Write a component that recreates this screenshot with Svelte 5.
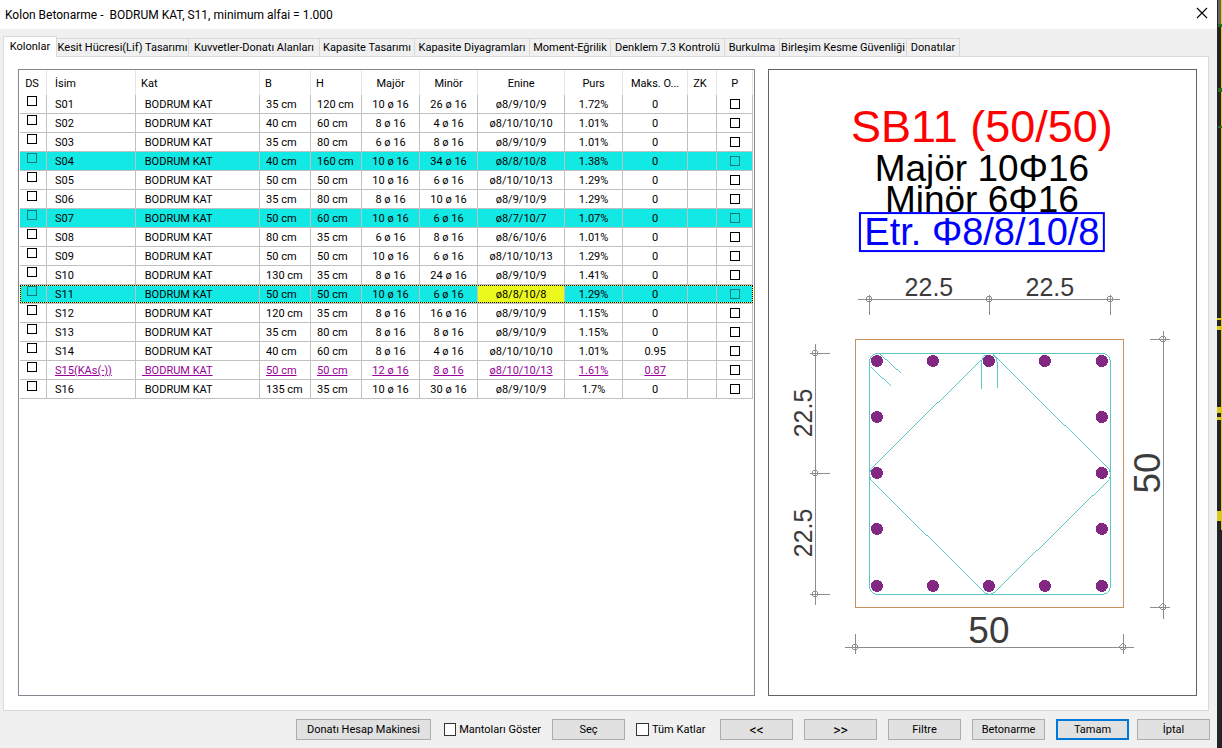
<script>
  const tabs = [
    { label: 'Kolonlar', width: 54 },
    { label: 'Kesit Hücresi(Lif) Tasarımı', width: 132 },
    { label: 'Kuvvetler-Donatı Alanları', width: 131 },
    { label: 'Kapasite Tasarımı', width: 95 },
    { label: 'Kapasite Diyagramları', width: 115 },
    { label: 'Moment-Eğrilik', width: 81 },
    { label: 'Denklem 7.3 Kontrolü', width: 114 },
    { label: 'Burkulma', width: 55 },
    { label: 'Birleşim Kesme Güvenliği', width: 127 },
    { label: 'Donatılar', width: 53 }
  ];

  const columns = [
    { label: 'DS', width: 27 },
    { label: 'İsim', width: 89 },
    { label: 'Kat', width: 124 },
    { label: 'B', width: 51 },
    { label: 'H', width: 51 },
    { label: 'Majör', width: 58 },
    { label: 'Minör', width: 58 },
    { label: 'Enine', width: 87 },
    { label: 'Purs', width: 58 },
    { label: 'Maks. O...', width: 65 },
    { label: 'ZK', width: 29 },
    { label: 'P', width: 36 }
  ];

  // name, b, h, major, minor, stirrup, ratio, max, state
  const rows = [
    ['S01', '35 cm', '120 cm', '10 ø 16', '26 ø 16', 'ø8/9/10/9', '1.72%', '0', ''],
    ['S02', '40 cm', '60 cm', '8 ø 16', '4 ø 16', 'ø8/10/10/10', '1.01%', '0', ''],
    ['S03', '35 cm', '80 cm', '6 ø 16', '8 ø 16', 'ø8/9/10/9', '1.01%', '0', ''],
    ['S04', '40 cm', '160 cm', '10 ø 16', '34 ø 16', 'ø8/8/10/8', '1.38%', '0', 'marked'],
    ['S05', '50 cm', '50 cm', '10 ø 16', '6 ø 16', 'ø8/10/10/13', '1.29%', '0', ''],
    ['S06', '35 cm', '80 cm', '8 ø 16', '10 ø 16', 'ø8/9/10/9', '1.29%', '0', ''],
    ['S07', '50 cm', '60 cm', '10 ø 16', '6 ø 16', 'ø8/7/10/7', '1.07%', '0', 'marked'],
    ['S08', '80 cm', '35 cm', '6 ø 16', '8 ø 16', 'ø8/6/10/6', '1.01%', '0', ''],
    ['S09', '50 cm', '50 cm', '10 ø 16', '6 ø 16', 'ø8/10/10/13', '1.29%', '0', ''],
    ['S10', '130 cm', '35 cm', '8 ø 16', '24 ø 16', 'ø8/9/10/9', '1.41%', '0', ''],
    ['S11', '50 cm', '50 cm', '10 ø 16', '6 ø 16', 'ø8/8/10/8', '1.29%', '0', 'marked focused'],
    ['S12', '120 cm', '35 cm', '8 ø 16', '16 ø 16', 'ø8/9/10/9', '1.15%', '0', ''],
    ['S13', '35 cm', '80 cm', '8 ø 16', '8 ø 16', 'ø8/9/10/9', '1.15%', '0', ''],
    ['S14', '40 cm', '60 cm', '8 ø 16', '4 ø 16', 'ø8/10/10/10', '1.01%', '0.95', ''],
    ['S15(KAs(-))', '50 cm', '50 cm', '12 ø 16', '8 ø 16', 'ø8/10/10/13', '1.61%', '0.87', 'failed'],
    ['S16', '135 cm', '35 cm', '10 ø 16', '30 ø 16', 'ø8/9/10/9', '1.7%', '0', '']
  ];

  // Rebar positions around the section
  const xs = [108, 164, 220, 276, 333];
  const ys = [291, 347, 403, 459, 516];
  const bars = [];
  xs.forEach((x, i) => {
    ys.forEach((y, j) => {
      if (i === 0 || i === 4 || j === 0 || j === 4) bars.push({ x, y });
    });
  });

  // Dimension line end marks
  const marks = [
    [100, 229], [220, 229], [341, 229],
    [46, 283], [46, 403], [46, 524],
    [394, 269], [394, 537],
    [86, 577], [354, 577]
  ];

  let activeTab = $state('Kolonlar');
</script>

<div class="screen">
  <div class="dialog">
    <header class="titlebar">
      <h1>Kolon Betonarme -&nbsp; BODRUM KAT, S11, minimum alfai = 1.000</h1>
      <button class="close" aria-label="Kapat">
        <svg width="12" height="12" viewBox="0 0 12 12">
          <path d="M1 1 L11 11 M11 1 L1 11" stroke="#000" stroke-width="1.1" fill="none" />
        </svg>
      </button>
    </header>

    <div class="tabs" role="tablist">
      {#each tabs as tab}
        <button
          class="tab"
          class:active={tab.label === activeTab}
          role="tab"
          aria-selected={tab.label === activeTab}
          style="width: {tab.width}px"
          onclick={() => (activeTab = tab.label)}
        >{tab.label}</button>
      {/each}
    </div>

    <main class="panel">
      <section class="list">
        <table>
          <colgroup>
            {#each columns as col}
              <col style="width: {col.width}px" />
            {/each}
          </colgroup>
          <thead>
            <tr>
              {#each columns as col}
                <th>{col.label}</th>
              {/each}
            </tr>
          </thead>
          <tbody>
            {#each rows as [name, b, h, major, minor, stirrup, ratio, max, status]}
              <tr class={status}>
                <td class="ds"><input type="checkbox" aria-label="DS {name}" /></td>
                <td class="name">{name}</td>
                <td class="floor">&nbsp;BODRUM KAT</td>
                <td class="size">{b}</td>
                <td class="size">{h}</td>
                <td>{major}</td>
                <td>{minor}</td>
                <td class="stirrup">{stirrup}</td>
                <td>{ratio}</td>
                <td>{max}</td>
                <td></td>
                <td class="p">
                  <input type="checkbox" aria-label="P {name}" />
                  {#if status.includes('focused')}<span class="focus-ring"></span>{/if}
                </td>
              </tr>
            {/each}
          </tbody>
        </table>
      </section>

      <section class="drawing">
        <svg viewBox="0 0 427 625" role="img" aria-label="SB11 kesiti">
          <g text-anchor="middle">
            <text class="t-title" x="213" y="72">SB11 (50/50)</text>
            <text class="t-bars" x="213" y="111">Majör 10Φ16</text>
            <text class="t-bars" x="213" y="142">Minör 6Φ16</text>
            <text class="t-tie" x="213" y="175">Etr. Φ8/8/10/8</text>
            <text class="t-dim" x="160" y="226">22.5</text>
            <text class="t-dim" x="281" y="226">22.5</text>
            <text class="t-dim" transform="translate(43 343) rotate(-90)">22.5</text>
            <text class="t-dim" transform="translate(43 463) rotate(-90)">22.5</text>
            <text class="t-total" transform="translate(391 403) rotate(-90)">50</text>
            <text class="t-total" x="220" y="573">50</text>
          </g>
          <rect class="frame" x="91" y="143" width="244" height="38" />

          <g class="lines" transform="translate(0.5 0.5)">
            <rect class="concrete" x="86" y="269" width="268" height="268" />

            <g class="ties">
              <rect x="100" y="283" width="241" height="241" rx="8" />
              <path d="M212 319 V292 Q212 286 217 284" />
              <path d="M224 284 Q228 286 228 292 V318" />
              <path d="M212 289 L101 399 Q99 404 101 409 L213 520 Q220 528 227 520 L340 409 Q343 404 340 399 L224 284" />
              <path d="M102 297 L122 316 M111 284 L132 303" />
            </g>

            <g class="dims">
              <path d="M89 229 H351 M100 224 V244 M220 224 V244 M341 224 V244" />
              <path d="M46 273 V535 M41 283 H61 M41 403 H61 M41 524 H61" />
              <path d="M394 260 V549 M381 269 H401 M381 537 H401" />
              <path d="M76 577 H365 M86 564 V584 M354 564 V584" />
            </g>
          </g>

          <g class="lines">
            {#each marks as [x, y]}
              <circle class="mark" cx={x} cy={y} r="3" />
            {/each}
            {#each bars as bar}
              <circle class="bar" cx={bar.x} cy={bar.y} r="6" />
            {/each}
          </g>
        </svg>
      </section>
    </main>

    <footer class="actions">
      <button class="btn wide">Donatı Hesap Makinesi</button>
      <label class="check first"><input type="checkbox" />Mantoları Göster</label>
      <button class="btn">Seç</button>
      <label class="check"><input type="checkbox" />Tüm Katlar</label>
      <button class="btn arrows">&lt;&lt;</button>
      <button class="btn arrows">&gt;&gt;</button>
      <button class="btn">Filtre</button>
      <button class="btn">Betonarme</button>
      <div class="confirm">
        <button class="btn default">Tamam</button>
        <button class="btn">İptal</button>
      </div>
    </footer>
  </div>
  <div class="backdrop"></div>
</div>

<style>
  :global(body) {
    margin: 0;
  }

  .screen {
    display: flex;
    min-height: 100vh;
    font-family: Roboto, "Liberation Sans", sans-serif;
    font-size: 11px;
    color: #000;
  }

  .dialog {
    flex: 1;
    min-width: 0;
    display: flex;
    flex-direction: column;
    background: #f0f0f0;
  }

  /* what is left visible of the CAD window behind */
  .backdrop {
    width: 5px;
    background:
      linear-gradient(#d8c81e, #d8c81e) 0 318px / 5px 2px no-repeat,
      linear-gradient(#d8c81e, #d8c81e) 0 326px / 5px 4px no-repeat,
      linear-gradient(#d8c81e, #d8c81e) 0 407px / 4px 6px no-repeat,
      linear-gradient(#d8c81e, #d8c81e) 0 417px / 4px 3px no-repeat,
      linear-gradient(#d8c81e, #d8c81e) 0 511px / 4px 10px no-repeat,
      linear-gradient(#2c6a24, #2c6a24) 1px 24px / 4px 3px no-repeat,
      linear-gradient(#2c6a24, #2c6a24) 1px 88px / 4px 4px no-repeat,
      linear-gradient(#2c6a24, #2c6a24) 1px 126px / 4px 2px no-repeat,
      linear-gradient(#e0c81e, #e0c81e) 4px 0 / 1px 530px no-repeat,
      linear-gradient(#666, #666) 1px 0 / 3px 24px no-repeat,
      #242426;
  }

  .titlebar {
    display: flex;
    align-items: center;
    justify-content: space-between;
    height: 29px;
    padding: 0 8px 0 5px;
    background: #fff;
  }

  h1 {
    margin: 0;
    height: 28px;
    font-size: 12px;
    font-weight: normal;
    line-height: 28px;
  }

  button {
    font: inherit;
    color: inherit;
    padding: 0;
    margin: 0;
    white-space: nowrap;
  }

  .close {
    display: flex;
    border: 0;
    background: none;
    padding: 0 1px 3px;
  }

  .tabs {
    display: flex;
    align-items: flex-end;
    height: 27px;
    padding-left: 3px;
  }

  .tab {
    box-sizing: border-box;
    height: 18px;
    border: 1px solid #d9d9d9;
    border-width: 1px 1px 0 0;
    background: #f0f0f0;
    line-height: 18px;
  }

  .tab.active {
    height: 21px;
    margin-bottom: -1px;
    border-left-width: 1px;
    background: #fff;
    z-index: 1;
  }

  .panel {
    flex: 1;
    display: flex;
    gap: 13px;
    margin: 0 8px 0 3px;
    padding: 12px 11px 14px 14px;
    border: 1px solid #d9d9d9;
    background: #fff;
  }

  .list,
  .drawing {
    box-sizing: border-box;
    min-width: 0;
    border: 1px solid #828790;
  }

  .list {
    flex: 737;
    padding: 0 1px;
  }

  .drawing {
    flex: 429;
    border-color: #646464;
  }

  table {
    width: 100%;
    table-layout: fixed;
    border-collapse: separate;
    border-spacing: 0;
  }

  th,
  td {
    box-sizing: border-box;
    padding: 2px 0 0;
    text-align: center;
    white-space: nowrap;
    overflow: hidden;
  }

  th {
    height: 25px;
    border-right: 1px solid #e5e5e5;
    font-weight: normal;
  }

  th:first-child {
    padding-right: 2px;
  }

  th:nth-child(2) {
    text-align: left;
    padding-left: 8px;
  }

  th:nth-child(3),
  th:nth-child(4),
  th:nth-child(5),
  th:nth-child(11) {
    text-align: left;
    padding-left: 5px;
  }

  td {
    height: 19px;
    line-height: 16px;
    border-right: 1px solid #c0c0c0;
    border-bottom: 1px solid #c0c0c0;
  }

  td.name {
    text-align: left;
    padding-left: 8px;
  }

  td.floor,
  td.size {
    text-align: left;
    padding-left: 6px;
  }

  td.ds {
    padding: 1px 3px 0 0;
    vertical-align: top;
  }

  td.p {
    padding: 0;
  }

  td input {
    appearance: none;
    display: block;
    box-sizing: border-box;
    width: 10px;
    height: 10px;
    margin: 0 auto;
    border: 1px solid #000;
  }

  .marked td {
    background: #12e8e4;
  }

  .marked input {
    border-color: #0b7a78;
  }

  .failed td {
    color: #990099;
    text-decoration: underline;
  }

  .focused {
    position: relative;
  }

  .focused td.stirrup {
    background: #ecf91c;
  }

  .focus-ring {
    position: absolute;
    inset: 0 0 1px;
    border: 1px solid #f4f41c;
    pointer-events: none;
  }

  .focus-ring::after {
    content: '';
    position: absolute;
    inset: -1px;
    border: 1px dotted #000;
  }

  .drawing svg {
    display: block;
    width: 100%;
    height: 100%;
    font-family: "Liberation Sans", Arial, sans-serif;
  }

  .t-title {
    font-size: 45px;
    fill: #f00;
  }

  .t-bars {
    font-size: 37px;
  }

  .t-tie {
    font-size: 38px;
    fill: #00f;
  }

  .t-dim {
    font-size: 25px;
    fill: #3c3c3c;
  }

  .t-total {
    font-size: 37px;
    fill: #3c3c3c;
  }

  .frame {
    fill: none;
    stroke: #00f;
    stroke-width: 2;
  }

  .lines {
    fill: none;
    shape-rendering: crispEdges;
  }

  .concrete {
    stroke: #c8925f;
  }

  .ties {
    stroke: #5cc8c8;
  }

  .dims,
  .mark {
    stroke: #8c8c8c;
  }

  .bar {
    fill: #822882;
  }

  .actions {
    display: flex;
    justify-content: flex-end;
    align-items: center;
    gap: 11px;
    padding: 8px 7px;
  }

  .confirm {
    display: flex;
    gap: 8px;
  }

  .btn {
    box-sizing: border-box;
    width: 73px;
    height: 21px;
    padding-top: 1px;
    border: 1px solid #adadad;
    background: #e1e1e1;
    line-height: 16px;
  }

  .btn.wide {
    width: 135px;
  }

  .btn.arrows {
    font-size: 14px;
  }

  .btn.default {
    border: 2px solid #0078d7;
  }

  .check {
    display: flex;
    align-items: center;
    gap: 3px;
    width: 73px;
    white-space: nowrap;
  }

  .check.first {
    width: 97px;
    margin-left: 2px;
  }

  .check input {
    appearance: none;
    box-sizing: border-box;
    width: 13px;
    height: 13px;
    margin: 0;
    border: 1px solid #333;
    background: #fff;
  }
</style>
